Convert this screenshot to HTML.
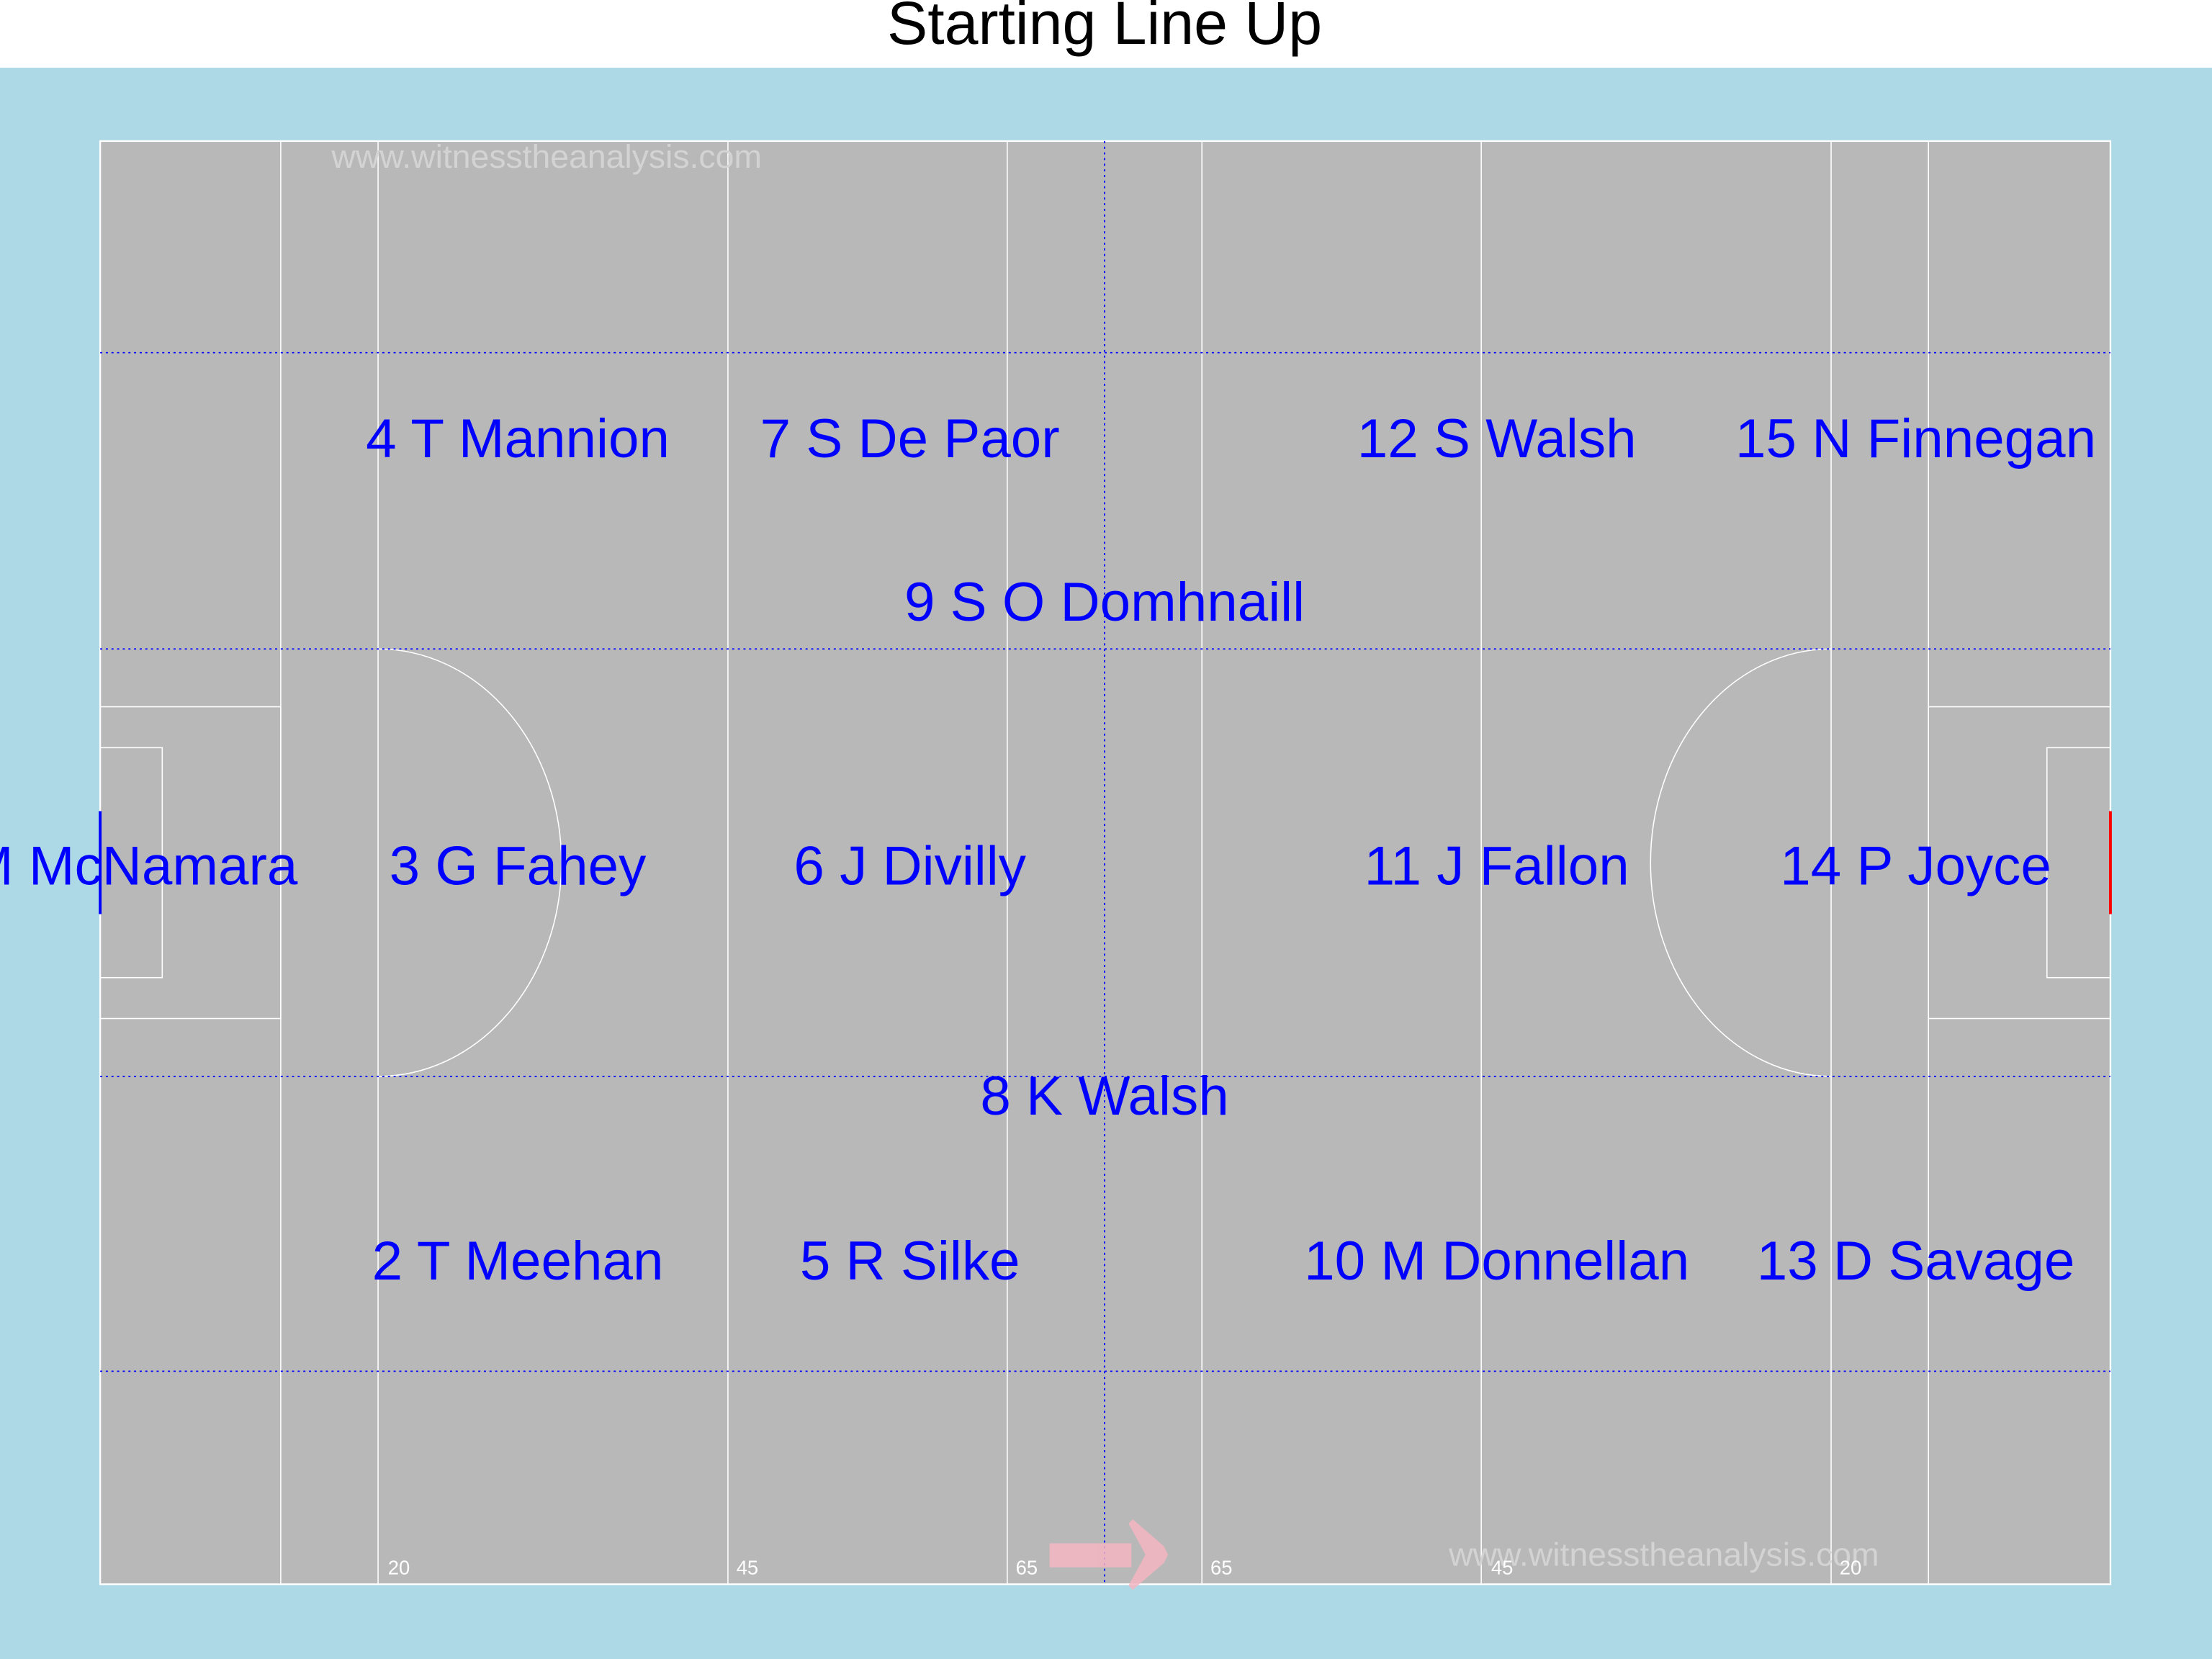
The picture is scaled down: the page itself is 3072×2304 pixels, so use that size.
<!DOCTYPE html>
<html><head><meta charset="utf-8"><style>
html,body{margin:0;padding:0;background:#fff}
svg{display:block}
text{font-family:"Liberation Sans",Arial,sans-serif}
</style></head><body>
<svg width="3072" height="2304" viewBox="0 0 1568 1176" xmlns="http://www.w3.org/2000/svg">
<rect x="0" y="0" width="1568" height="1176" fill="#fff"/>
<rect x="0" y="48" width="1568" height="1128" fill="#add8e6"/>
<text x="783" y="31" font-size="43" text-anchor="middle" fill="#000">Starting Line Up</text>
<rect x="71" y="100" width="1425" height="1023" fill="#b8b8b8" stroke="#fff" stroke-width="1.2"/>
<g stroke="#fff" stroke-width="0.8" fill="none">
<line x1="199" y1="100" x2="199" y2="1123"/>
<line x1="268" y1="100" x2="268" y2="1123"/>
<line x1="516" y1="100" x2="516" y2="1123"/>
<line x1="714" y1="100" x2="714" y2="1123"/>
<line x1="852" y1="100" x2="852" y2="1123"/>
<line x1="1050" y1="100" x2="1050" y2="1123"/>
<line x1="1298" y1="100" x2="1298" y2="1123"/>
<line x1="1367" y1="100" x2="1367" y2="1123"/>
<rect x="71" y="501" width="128" height="221"/>
<rect x="71" y="530" width="44" height="163"/>
<rect x="1367" y="501" width="129" height="221"/>
<rect x="1451" y="530" width="45" height="163"/>
<path d="M268 460 A130 151.5 0 0 1 268 763"/>
<path d="M1298 460 A128 151.5 0 0 0 1298 763"/>
</g>
<g stroke="#00f" stroke-width="0.9" stroke-dasharray="1.5 2.5" fill="none">
<line x1="71" y1="250" x2="1496" y2="250"/>
<line x1="71" y1="460" x2="1496" y2="460"/>
<line x1="71" y1="763" x2="1496" y2="763"/>
<line x1="71" y1="972" x2="1496" y2="972"/>
<line x1="783" y1="100" x2="783" y2="1123"/>
</g>
<line x1="71" y1="575" x2="71" y2="648" stroke="#00f" stroke-width="2"/>
<line x1="1496" y1="575" x2="1496" y2="648" stroke="#f00" stroke-width="2"/>
<g fill="#d3d3d3" font-size="23">
<text x="235" y="119" textLength="305" lengthAdjust="spacingAndGlyphs">www.witnesstheanalysis.com</text>
<text x="1027" y="1110" textLength="305" lengthAdjust="spacingAndGlyphs">www.witnesstheanalysis.com</text>
</g>
<g fill="#fff" font-size="14">
<text x="275" y="1116">20</text>
<text x="522" y="1116">45</text>
<text x="720" y="1116">65</text>
<text x="858" y="1116">65</text>
<text x="1057" y="1116">45</text>
<text x="1304" y="1116">20</text>
</g>
<g fill="#f4b6c2" opacity="0.85">
<rect x="744" y="1094" width="58" height="17"/>
<polygon points="803,1077 825,1096 828,1102 825,1108 803,1127 800,1124 812,1102 800,1080"/>
</g>
<g fill="#00f" font-size="39" text-anchor="middle">
<text x="367" y="324">4 T Mannion</text>
<text x="645" y="324">7 S De Paor</text>
<text x="1061" y="324">12 S Walsh</text>
<text x="1358" y="324">15 N Finnegan</text>
<text x="783" y="440">9 S O Domhnaill</text>
<text x="211" y="627" text-anchor="end">M McNamara</text>
<text x="367" y="627">3 G Fahey</text>
<text x="645" y="627">6 J Divilly</text>
<text x="1061" y="627">11 J Fallon</text>
<text x="1358" y="627">14 P Joyce</text>
<text x="783" y="790">8 K Walsh</text>
<text x="367" y="907">2 T Meehan</text>
<text x="645" y="907">5 R Silke</text>
<text x="1061" y="907">10 M Donnellan</text>
<text x="1358" y="907">13 D Savage</text>
</g>
</svg>
</body></html>
